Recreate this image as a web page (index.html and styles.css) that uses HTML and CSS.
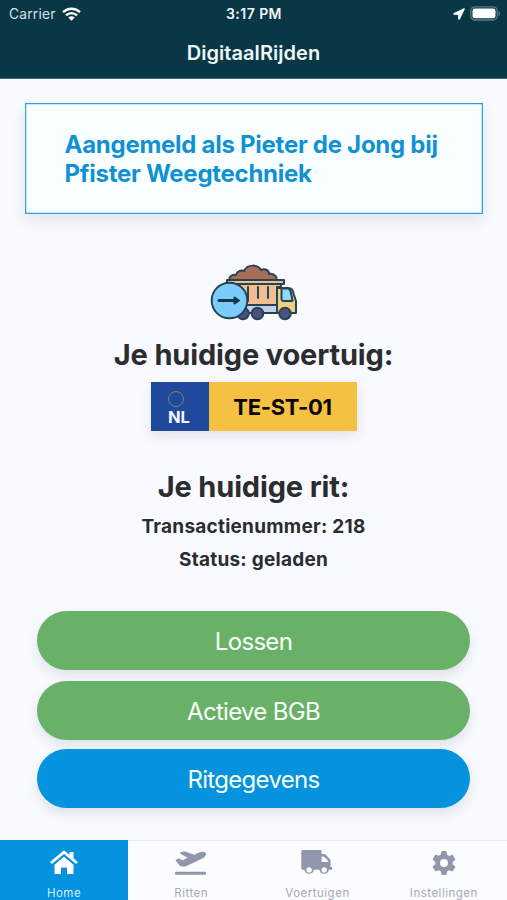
FILE: index.html
```html
<!DOCTYPE html>
<html lang="nl">
<head>
<meta charset="utf-8">
<meta name="viewport" content="width=device-width, initial-scale=1">
<title>DigitaalRijden</title>
<link rel="stylesheet" href="styles.css">
</head>
<body>
<div class="app">
  <header class="header">
    <div class="status">
      <div class="carrier"><span>Carrier</span>
        <svg width="19" height="14" viewBox="0 0 19 14" fill="none" stroke="#fff" stroke-width="2.4"><path d="M1 5.2C5.8.6 13.2.6 18 5.2M4 8.4c3.2-3 7.8-3 11 0"/><path d="M9.500 13.700 6.300 10.500c1.800-1.600 4.600-1.600 6.400 0z" fill="#fff" stroke="none"/></svg>
      </div>
      <span class="time">3:17 PM</span>
      <div class="indicators">
        <svg width="12" height="12" viewBox="0 0 12 12"><path d="M11 .7.900 5.500c-.5.300-.4.900.2.900h4.500v4.500c0 .6.700.7.900.2L11.400 1c.1-.3-.1-.4-.4-.3z" fill="#fff" stroke="#fff" stroke-width=".9"/></svg>
        <svg width="31" height="15" viewBox="0 0 31 15"><rect x=".8" y=".8" width="26.400" height="13.200" rx="4" fill="none" stroke="#5b7984" stroke-width="1.300"/><rect x="2.500" y="2.500" width="23" height="9.800" rx="2.200" fill="#fff"/><path d="M28.500 5c2.300 1 2.300 4 0 5z" fill="#5b7984"/></svg>
      </div>
    </div>
    <h1 class="title">DigitaalRijden</h1>
  </header>
  <main class="content">
    <section class="card"><p>Aangemeld als Pieter de Jong bij<br>Pfister Weegtechniek</p></section>
    <svg class="truck" width="88" height="58" viewBox="0 0 88 58" stroke="#254454" stroke-width="2" stroke-linejoin="round" stroke-linecap="round">
      <path d="M20 17c-2-4 2-7 6-6 1-4 5-5 8-4 3-7 14-7 17-1 4-2 8 0 8 4 5-1 9 3 7 7z" fill="#a66e59"/>
      <path d="M22 19h49v4h-4v18H31z" fill="#f2bd91"/>
      <path d="M17 16h57v4H17z" fill="#f2bd91"/>
      <path d="M35 41h33v8H35z" fill="#c8d0e8"/>
      <path d="M69 24h9c4 0 5 2 6 7l2 6v12H67V24z" fill="#f2cf7d"/>
      <path d="M71.500 24.500h6.500c2 0 3 2 4.500 12.500h-9c-2 0-2-1-2-3z" fill="#8ed8fa"/>
      <path d="M38 23v14M48 23v11M58 23v11" fill="none"/>
      <circle cx="33" cy="49.500" r="5.800" fill="#4d4f82"/><circle cx="47.500" cy="49.500" r="5.800" fill="#4d4f82"/><circle cx="75" cy="49.500" r="5.800" fill="#4d4f82"/>
      <circle cx="19.500" cy="36.500" r="17.800" fill="#7bccfa"/>
      <path d="M9 36.500h18" fill="none" stroke="#153848" stroke-width="3"/><path d="m24.500 33.500 4.500 3-4.500 3z" fill="#153848" stroke="#153848"/>
    </svg>
    <h2 class="heading vehicle-heading">Je huidige voertuig:</h2>
    <div class="plate"><div class="country"><i class="ring"></i><span>NL</span></div><div class="number"><span>TE-ST-01</span></div></div>
    <h2 class="heading trip-heading">Je huidige rit:</h2>
    <p class="detail transaction">Transactienummer: 218</p>
    <p class="detail state">Status: geladen</p>
    <div class="actions">
      <button class="button unload"><span>Lossen</span></button>
      <button class="button active-bgb"><span>Actieve BGB</span></button>
      <button class="button info"><span>Ritgegevens</span></button>
    </div>
  </main>
  <nav class="tabs">
    <a class="tab selected"><svg width="28" height="24" viewBox="0 0 28 24"><path d="M1 12 14 1.200 27 12" fill="none" stroke="#fff" stroke-width="2.800" stroke-linejoin="round"/><path d="M19.500 1h4v8l-4-3z" fill="#fff"/><path d="m14 5.800 9.500 7.900V22c0 .6-.4 1-1 1H17v-6.500h-6V23H5.500c-.6 0-1-.4-1-1v-8.300z" fill="#fff"/></svg><span>Home</span></a>
    <a class="tab"><svg width="32" height="24" viewBox="0 0 32 24" fill="#9296ab"><rect x="0" y="20.800" width="31" height="3" rx="1"/><path d="M1.200 10.200c-.8-.8-.5-1.500.3-1.800l2-.8c.4-.2.800-.1 1.200.1l2.800 1.500 5-2.400-7-4c-.7-.5-.6-1.300.2-1.600L8.500.5c.5-.2 1-.1 1.500.1l9.300 3.100L24 1.500c2-.9 5.500-1.200 6.700.6 1.100 2-.9 4.100-2.900 5.100L11.500 15c-.8.400-1.700.6-2.600.6H6.500c-.7 0-1.200-.3-1.600-.8z"/></svg><span>Ritten</span></a>
    <a class="tab"><svg width="32" height="26" viewBox="0 0 32 26"><path fill="#9296ab" fill-rule="evenodd" d="M2 0h17c1.100 0 1.600.7 1.600 1.700V4H23c.8 0 1.300.3 1.800.8l4 4.100c.6.600.8 1.200.8 2V17h.8c.6 0 .9.400.9 1v.8c0 .6-.3 1-.9 1h-2.600a4.700 4.700 0 0 1-9.300 0h-5.800a4.700 4.700 0 0 1-9.300 0H2C1 19.800.3 19.100.3 18V1.700C.3.700 1 0 2 0zm18.600 6.500v5.600h6.600V11l-4.400-4.500z"/><circle cx="8.100" cy="19.900" r="2.700" fill="#fafcff"/><circle cx="23.200" cy="19.900" r="2.700" fill="#fafcff"/></svg><span>Voertuigen</span></a>
    <a class="tab"><svg width="24" height="24" viewBox="0 0 24 24"><path fill="#9296ab" fill-rule="evenodd" d="m9.500.6-.6 3-2 1.200-2.900-1c-.4-.1-.7 0-.9.300L.8 8c-.2.400-.1.700.2 1l2.300 2v2.300L1 15.200c-.3.300-.4.600-.2 1L3.100 20c.2.400.5.500.9.300l2.900-1 2 1.200.6 2.900c.1.400.3.600.7.600h3.600c.4 0 .7-.2.700-.6l.6-2.900 2-1.200 2.900 1c.4.200.7.100.9-.3l2.300-3.800c.2-.4.100-.7-.2-1l-2.300-2V11L23 9c.3-.3.400-.6.200-1l-2.300-3.800c-.2-.4-.5-.5-.9-.3l-2.900 1-2-1.200-.6-3.100c0-.4-.3-.6-.7-.6h-3.600c-.4 0-.6.200-.7.600zM12 8a4 4 0 1 1 0 8 4 4 0 0 1 0-8z"/></svg><span>Instellingen</span></a>
  </nav>
</div>
</body>
</html>
```
FILE: styles.css
```css
* { box-sizing: border-box; }
body { margin: 0; font-family: Inter, "Liberation Sans", sans-serif; background: #f8faff; color: #2b2c2f; }
h1, h2, p { margin: 0; }
.app { height: 900px; display: flex; flex-direction: column; overflow: hidden; }
.header { height: 79px; flex: none; background: #093746; color: #fff; border-bottom: 1px solid #436b85; }
.status { height: 27px; padding: 0 6px 0 9px; display: grid; grid-template-columns: 1fr auto 1fr; align-items: center; font-size: 14px; }
.carrier { display: flex; align-items: center; gap: 6px; color: #d6e1e5; font-size: 13.8px; letter-spacing: .2px; }
.time { font-weight: 600; letter-spacing: .45px; color: #f0f5f7; position: relative; left: -1px; }
.indicators { display: flex; align-items: center; justify-content: flex-end; gap: 5px; }
.title { font-size: 20px; line-height: 24px; margin-top: 14px; text-align: center; font-weight: 600; letter-spacing: .05px; color: #eff7fa; }
.content { flex: 1; display: flex; flex-direction: column; align-items: center; }
.card { margin-top: 24px; width: 458px; height: 111px; padding: 26px 38px; background: #f9feff; border: 1.500px solid #2fa0dc; box-shadow: inset 0 0 0 .5px #2fa0dc80, 0 7px 14px #1b254018; }
.card p { padding-left: 1px; font-size: 24px; line-height: 29px; font-weight: 700; color: #1191d4; white-space: nowrap; letter-spacing: -.27px; }
.truck { margin-top: 50px; flex: none; }
.heading { font-size: 29px; line-height: 36px; font-weight: 700; letter-spacing: -.15px; }
.vehicle-heading { margin-top: 15px; }
.plate { margin: 9px 0 38px; display: flex; width: 206px; height: 49px; box-shadow: 0 5px 12px #1b25401c; }
.country { width: 58px; background: #1e499c; display: flex; flex-direction: column; align-items: center; padding-top: 9px; color: #f4f8ff; font-size: 16.5px; line-height: 18px; font-weight: 700; }
.ring { width: 16px; height: 16px; border: 1px solid #85815f; border-radius: 50%; margin-right: 8px; }
.country span { margin-top: 1px; margin-right: 1px; }
.number { flex: 1; display: grid; place-items: center; background: #f5c143; color: #080704; font-size: 22px; font-weight: 700; letter-spacing: -.3px; }
.detail { font-size: 19px; line-height: 24px; font-weight: 700; letter-spacing: .24px; }
.transaction { margin-top: 10px; }
.state { margin-top: 9px; }
.actions { margin-top: 39px; width: 433px; display: flex; flex-direction: column; }
.button { height: 59px; border: 0; border-radius: 30px; background: #69b168; color: #f8fff8; font: 400 24px Inter, sans-serif; letter-spacing: -.7px; padding-top: 2px; box-shadow: 0 6px 12px #1b25401c; }
.active-bgb { margin-top: 11px; }
.info { margin-top: 9px; background: #0493dc; }
.tabs { height: 60px; flex: none; display: grid; grid-template-columns: 128px repeat(3, 1fr); background: #fafcff; border-top: 1px solid #e5e8ed; }
.tab { display: flex; flex-direction: column; align-items: center; font-size: 11.500px; line-height: 14px; letter-spacing: .5px; color: #a7aab5; }
.tab svg { margin-top: 9px; height: 26px; }
.tab span { margin-top: 10px; }
.selected { margin-top: -1px; padding-top: 1px; background: #0493dc; color: #d7efff; }
```
